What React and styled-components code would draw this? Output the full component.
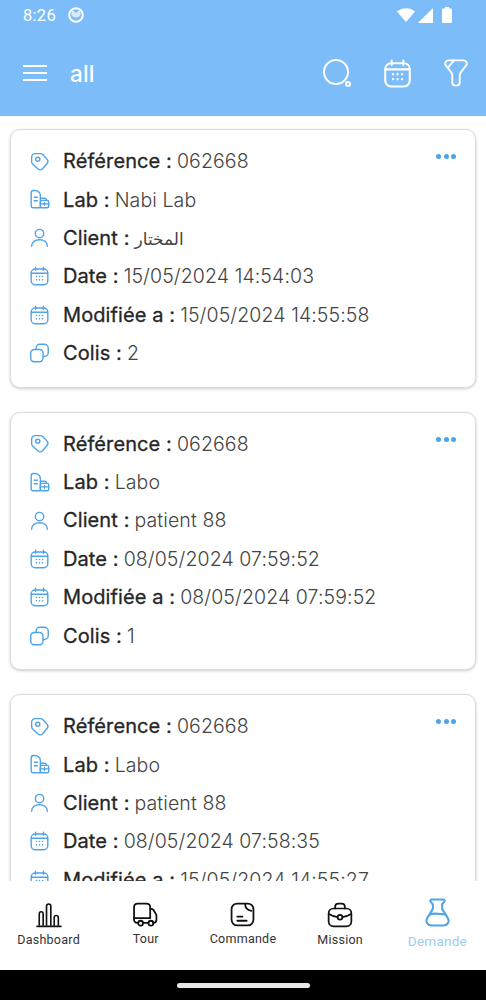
import React from "react";
import styled, { createGlobalStyle } from "styled-components";

const Global = createGlobalStyle`
  html, body { margin: 0; padding: 0; background: #fff; }
  * { box-sizing: border-box; }
`;

const Screen = styled.div`
  width: 486px;
  height: 1000px;
  display: flex;
  flex-direction: column;
  overflow: hidden;
  background: #fff;
  font-family: Inter, "Noto Sans", sans-serif;
`;

const Header = styled.header`
  height: 116px;
  flex: none;
  background: #7cbdf9;
  color: #fff;
  display: flex;
  flex-direction: column;
`;

const StatusBar = styled.div`
  height: 30px;
  padding: 0 34px 0 23px;
  display: flex;
  align-items: center;
  justify-content: space-between;
  font-family: Roboto, sans-serif;
  font-size: 16.5px;
  letter-spacing: 0.3px;
`;

const Cluster = styled.div`
  display: flex;
  align-items: center;
  gap: ${(p) => p.$gap || 0}px;
`;

const Toolbar = styled.div`
  flex: 1;
  padding: 0 17px 0 23px;
  display: flex;
  align-items: center;
  justify-content: space-between;
`;

const Title = styled.div`
  font-size: 22.5px;
  font-weight: 500;
  margin-left: 23px;
  letter-spacing: 0.2px;
`;

const ToolActions = styled.div`
  display: flex;
  align-items: center;
  gap: 30.5px;
`;

const List = styled.main`
  flex: 1;
  min-height: 0;
  overflow: hidden;
  padding: 13px 10px 0;
  display: flex;
  flex-direction: column;
  gap: 24px;
`;

const Card = styled.section`
  flex: none;
  position: relative;
  height: 258.5px;
  padding: 12px 18px 0;
  background: #fff;
  border: 1px solid #dcdcdc;
  border-radius: 10px;
  box-shadow: 0 1px 3px rgba(0, 0, 0, 0.2);
`;

const Dots = styled.div`
  position: absolute;
  top: 24px;
  right: 19px;
  display: flex;
  gap: 2.5px;
`;

const Dot = styled.span`
  width: 5px;
  height: 5px;
  border-radius: 50%;
  background: #4fa3e8;
`;

const Row = styled.div`
  height: 38.4px;
  display: flex;
  align-items: center;
  gap: 13px;
  white-space: nowrap;
`;

const RowIcon = styled.span`
  width: 21px;
  height: 22px;
  flex: none;
  display: flex;
  align-items: center;
  justify-content: center;
  color: #4fa3e8;
`;

const Label = styled.span`
  font-size: 20px;
  font-weight: 400;
  -webkit-text-stroke: 0.3px #262626;
  color: #262626;
  letter-spacing: 0.1px;
`;

const Value = styled.span`
  font-size: 19.5px;
  font-weight: 300;
  color: #444;
  margin-left: 5px;
  letter-spacing: 0.1px;
`;

const Arabic = styled.span`
  font-family: "Noto Sans", "DejaVu Sans", sans-serif;
  font-size: 17px;
  color: #444;
  margin-left: 5px;
`;

const Nav = styled.nav`
  height: 89px;
  flex: none;
  background: #fff;
  display: grid;
  grid-template-columns: repeat(5, 1fr);
  position: relative;
`;

const NavItem = styled.div`
  display: flex;
  flex-direction: column;
  align-items: center;
  padding-top: ${(p) => (p.$active ? 17 : 21)}px;
  gap: ${(p) => (p.$active ? 6 : 4)}px;
  color: ${(p) => (p.$active ? "#4fa3e8" : "#111")};
`;

const NavLabel = styled.span`
  font-family: Roboto, sans-serif;
  font-size: ${(p) => (p.$active ? 13.5 : 12.5)}px;
  letter-spacing: 0.25px;
  line-height: 16px;
  color: ${(p) => (p.$active ? "#9ccbf3" : "#333")};
`;

const Gesture = styled.div`
  height: 30px;
  flex: none;
  background: #000;
  display: flex;
  align-items: center;
  justify-content: center;
`;

const Pill = styled.div`
  width: 133px;
  height: 5px;
  border-radius: 3px;
  background: #e8e8e8;
`;

const Svg = ({ size = 22, sw = 1.6, children }) => (
  <svg
    width={size}
    height={size}
    viewBox="0 0 24 24"
    fill="none"
    stroke="currentColor"
    strokeWidth={sw}
    strokeLinecap="round"
    strokeLinejoin="round"
  >
    {children}
  </svg>
);

const TagIcon = () => (
  <Svg size={21}>
    <path d="M3 7.5C3 4.5 5 3 7.5 3H13c1.2 0 2.2.5 3 1.3l4.6 5c1.3 1.5 1.3 3.5 0 5l-5 6c-1.5 1.700-3.800 1.700-5.300.3l-5.600-5.200C3.700 14.500 3 13.400 3 12.200V7.500z" />
    <circle cx="10" cy="9.500" r="2.400" />
  </Svg>
);

const LabIcon = () => (
  <Svg size={23}>
    <path d="M13 21.500H4.500c-1.200 0-2-.8-2-2V4.500c0-1.800 1-2.800 2.600-2.800H7c3.300 0 6 2.500 6 5.800v14z" />
    <path d="M6 9.500h3.500M6 13.500h3.500" />
    <path d="M13 10.500h4.500c1.300 0 2.500 1 2.500 2.500" />
    <rect x="13" y="13" width="9.500" height="8.500" rx="1.800" />
    <path d="M13 17h9.500M17.700 15.500v3" />
  </Svg>
);

const UserIcon = () => (
  <Svg size={23}>
    <circle cx="12" cy="7.500" r="4.800" />
    <path d="M3 22c0-5 4-7.500 9-7.500s9 2.500 9 7.500" />
  </Svg>
);

const CalendarIcon = ({ size = 22, sw = 1.6 }) => (
  <Svg size={size} sw={sw}>
    <rect x="2.500" y="4" width="19" height="18" rx="4.500" />
    <path d="M2.800 8.800h18.400M7.500 2v3.500M16.500 2v3.500" />
    <path d="M8.500 12.600h.01M12 12.600h.01M15.500 12.600h.01M8.500 16.400h.01M12 16.400h.01M15.500 16.400h.01" strokeWidth={sw * 1.15} />
  </Svg>
);

const StackIcon = () => (
  <Svg size={22}>
    <rect x="2" y="8" width="14" height="14" rx="4" />
    <path d="M8 8V6.500C8 4 10 2 12.500 2h5C20 2 22 4 22 6.500v5c0 2.500-2 4.500-4.500 4.500H16" />
  </Svg>
);

const Menu = () => (
  <svg width="24" height="18" viewBox="0 0 24 18" fill="none" stroke="#fff" strokeWidth="2.200">
    <path d="M0 2h24M0 9h24M0 16h24" />
  </svg>
);

const SearchIcon = () => (
  <svg width="28" height="28" viewBox="0 0 28 28" fill="none" stroke="#fff" strokeWidth="2">
    <circle cx="13" cy="13" r="12" />
    <circle cx="25" cy="25" r="2" />
  </svg>
);

const FunnelIcon = () => (
  <svg width="26" height="28" viewBox="0 0 26 30" fill="none" stroke="#fff" strokeWidth="2" strokeLinejoin="round" strokeLinecap="round">
    <path d="M5 1.500h16c3 0 4.300 2.800 3 5.200l-6 7.800c-.7 1-1 2-1 3.200V25c0 2.200-1.600 3.500-3.500 3.500h-1C10.600 28.500 9 27.200 9 25v-7.300c0-1.200-.3-2.200-1-3.200L2 6.700C.7 4.300 2 1.500 5 1.500z" />
    <path d="M4 9.500 11 1.500" />
  </svg>
);

const FaceIcon = () => (
  <svg width="16" height="16" viewBox="0 0 16 16">
    <circle cx="8" cy="8" r="6.800" fill="#7cbdf9" stroke="#fff" strokeWidth="2" />
    <path d="M3.500 7V3.500L6 5.200h4L12.500 3.500V7c0 2-2 3.500-4.500 3.500S3.500 9 3.500 7z" fill="#d5e9fd" />
    <path d="M3.500 3.500 6 5.200M10 5.200l2.500-1.700" stroke="#fff" strokeWidth="1.200" />
  </svg>
);

const WifiIcon = () => (
  <svg width="18" height="14" viewBox="0 0 18 14">
    <path d="M0 3.500C5 -1 13 -1 18 3.500L9 14z" fill="#fff" />
  </svg>
);

const SignalIcon = () => (
  <svg width="15" height="15" viewBox="0 0 15 15">
    <path d="M15 0v15H0z" fill="#fff" />
  </svg>
);

const BatteryIcon = () => (
  <svg width="10" height="16" viewBox="0 0 10 16" style={{ marginLeft: 6 }}>
    <path d="M3 0h4v1.500h2a1 1 0 0 1 1 1V15a1 1 0 0 1-1 1H1a1 1 0 0 1-1-1V2.500a1 1 0 0 1 1-1h2z" fill="#fff" />
  </svg>
);

const BarsIcon = () => (
  <svg width="26" height="26" viewBox="0 0 24 24" fill="none" stroke="currentColor" strokeWidth="1.500" strokeLinejoin="round">
    <path d="M1 22.500h22" strokeLinecap="round" />
    <path d="M3 22V11c0-1.200.8-2 1.800-2s1.800.8 1.800 2v11" />
    <path d="M9.700 22V4c0-1.400.9-2.200 2-2.200s2 .8 2 2.200v18" />
    <path d="M16.800 22v-7.500c0-1.200.8-2 1.900-2s1.900.8 1.900 2V22" />
  </svg>
);

const TruckIcon = () => (
  <svg width="25" height="25" viewBox="0 0 24 24" fill="none" stroke="currentColor" strokeWidth="1.700" strokeLinejoin="round" strokeLinecap="round">
    <path d="M4.500 20H4c-1.800 0-3-1.300-3-3V5c0-2 1.500-3.500 3.500-3.500H13c2 0 3.500 1.500 3.500 3.500v1.500" />
    <path d="M1 15.500h15.500V6.500h1c.8 0 1.500.4 2 1l2.500 4c.4.600.5 1.200.5 1.800V17c0 1.700-1.300 3-3 3h-.5" />
    <path d="M10 20h4.500" />
    <circle cx="7.300" cy="20.300" r="2.300" />
    <circle cx="17.200" cy="20.300" r="2.300" />
  </svg>
);

const NoteIcon = () => (
  <svg width="25" height="25" viewBox="0 0 24 24" fill="none" stroke="currentColor" strokeWidth="1.700" strokeLinecap="round" strokeLinejoin="round">
    <rect x="1.500" y="1.500" width="21" height="21" rx="5.500" />
    <path d="M14.500 2c0 3.500 2 6 6 6.500" />
    <path d="M7 14h5M7 18h9" />
  </svg>
);

const CaseIcon = () => (
  <svg width="26" height="26" viewBox="0 0 24 24" fill="none" stroke="currentColor" strokeWidth="1.600" strokeLinecap="round" strokeLinejoin="round">
    <rect x="1.500" y="6" width="21" height="16.500" rx="4.500" />
    <path d="M7.500 6V4.500c0-1.700 1.300-3 3-3h3c1.700 0 3 1.300 3 3V6" />
    <path d="M1.800 11c3 1.800 6 2.800 8 3M22.200 11c-3 1.800-6 2.800-8 3" />
    <circle cx="12" cy="14" r="2.200" />
  </svg>
);

const FlaskIcon = () => (
  <svg width="25" height="29" viewBox="0 0 24 28" fill="none" stroke="currentColor" strokeWidth="2" strokeLinecap="round" strokeLinejoin="round">
    <path d="M6.500 1.500h11c1.300 0 1.800 1.300 1 2.200L16.500 6v4.500l5.500 9c1.800 3.300-.2 7-4 7H6c-3.800 0-5.800-3.700-4-7l5.500-9V6L5.500 3.700c-.8-.9-.3-2.200 1-2.200z" />
    <path d="M4.500 16c4-2 9-.5 15 0" />
  </svg>
);

const rowIcons = {
  ref: <TagIcon />,
  lab: <LabIcon />,
  client: <UserIcon />,
  date: <CalendarIcon />,
  colis: <StackIcon />,
};

const InfoRow = ({ icon, label, value, arabic }) => (
  <Row>
    <RowIcon>{rowIcons[icon]}</RowIcon>
    <div>
      <Label>{label} :</Label>
      {arabic ? <Arabic dir="rtl">{value}</Arabic> : <Value>{value}</Value>}
    </div>
  </Row>
);

const cards = [
  { lab: "Nabi Lab", client: "المختار", arabic: true, date: "15/05/2024 14:54:03", mod: "15/05/2024 14:55:58", colis: "2" },
  { lab: "Labo", client: "patient 88", date: "08/05/2024 07:59:52", mod: "08/05/2024 07:59:52", colis: "1" },
  { lab: "Labo", client: "patient 88", date: "08/05/2024 07:58:35", mod: "15/05/2024 14:55:27", colis: "1" },
];

const navItems = [
  { label: "Dashboard", icon: <BarsIcon /> },
  { label: "Tour", icon: <TruckIcon /> },
  { label: "Commande", icon: <NoteIcon /> },
  { label: "Mission", icon: <CaseIcon /> },
  { label: "Demande", icon: <FlaskIcon />, active: true },
];

export default function App() {
  return (
    <Screen>
      <Global />
      <Header>
        <StatusBar>
          <Cluster $gap={12}>
            <span>8:26</span>
            <FaceIcon />
          </Cluster>
          <Cluster $gap={3}>
            <WifiIcon />
            <SignalIcon />
            <BatteryIcon />
          </Cluster>
        </StatusBar>
        <Toolbar>
          <Cluster>
            <Menu />
            <Title>all</Title>
          </Cluster>
          <ToolActions>
            <SearchIcon />
            <CalendarIcon size={31} sw={1.6} />
            <FunnelIcon />
          </ToolActions>
        </Toolbar>
      </Header>
      <List>
        {cards.map((c, i) => (
          <Card key={i}>
            <Dots>
              <Dot />
              <Dot />
              <Dot />
            </Dots>
            <InfoRow icon="ref" label="Référence" value="062668" />
            <InfoRow icon="lab" label="Lab" value={c.lab} />
            <InfoRow icon="client" label="Client" value={c.client} arabic={c.arabic} />
            <InfoRow icon="date" label="Date" value={c.date} />
            <InfoRow icon="date" label="Modifiée a" value={c.mod} />
            <InfoRow icon="colis" label="Colis" value={c.colis} />
          </Card>
        ))}
      </List>
      <Nav>
        {navItems.map((n) => (
          <NavItem key={n.label} $active={n.active}>
            {n.icon}
            <NavLabel $active={n.active}>{n.label}</NavLabel>
          </NavItem>
        ))}
      </Nav>
      <Gesture>
        <Pill />
      </Gesture>
    </Screen>
  );
}
